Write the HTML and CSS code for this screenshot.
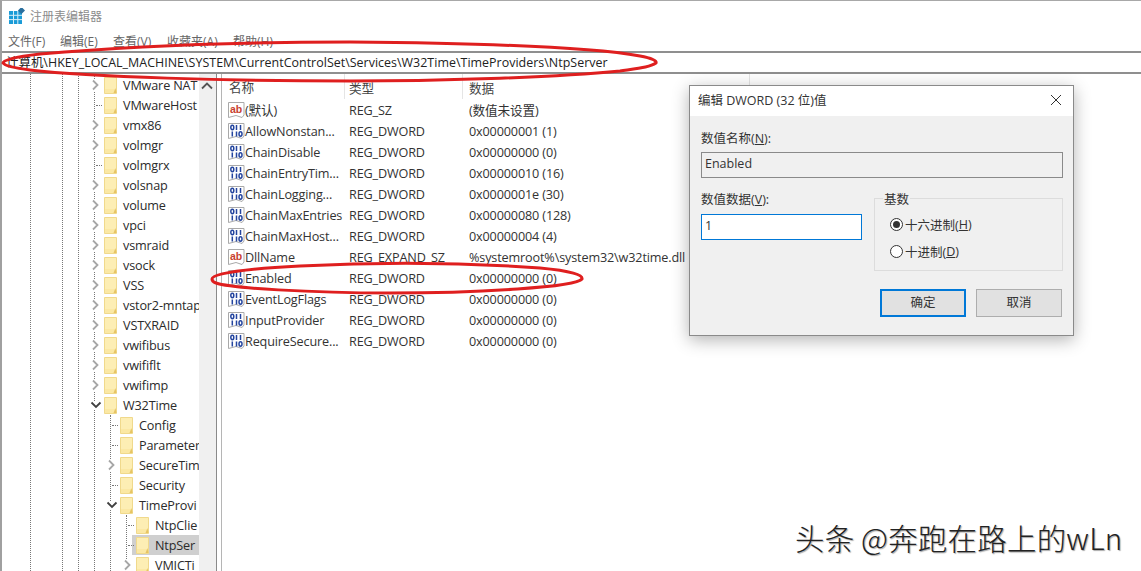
FILE: index.html
```html
<!DOCTYPE html>
<html lang="en">
<head>
    <meta charset="UTF-8">
    <title>注册表编辑器</title>
    <link rel="stylesheet" href="styles.css">
</head>
<body>
    <svg class="defs" width="0" height="0">
        <symbol id="folder" viewBox="0 0 13 20">
            <path d="M0.500 2.500h12v16h-12z" fill="#fbe8a4" stroke="#f0d98c"/>
            <path d="M1 3h11v11h-11z" fill="#fdeeb4"/>
            <path d="M9.500 18l2-5 1 5z" fill="#e6c463"/>
        </symbol>
        <symbol id="dword" viewBox="0 0 17 18">
            <path d="M0.500 1.500h15.500v12.500l-2 2.500-6-2-7.500 2z" fill="#fff" stroke="#a9a9a9"/>
            <g fill="none" stroke="#24459f" stroke-width="1.500">
                <ellipse cx="4.300" cy="5.500" rx="1.500" ry="2.200"/>
                <path d="M8.500 3v5M12.500 3v5"/>
                <path d="M4.300 9.500v5M8.500 9.500v5"/>
                <ellipse cx="12.500" cy="12" rx="1.500" ry="2.200"/>
            </g>
        </symbol>
        <symbol id="closed" viewBox="0 0 9 12">
            <path d="M2 1.500l4.500 4.500-4.500 4.500" fill="none" stroke="#a6a6a6" stroke-width="1.800"/>
        </symbol>
        <symbol id="open" viewBox="0 0 12 9">
            <path d="M1.500 1.500l4.500 4.500 4.500-4.500" fill="none" stroke="#404040" stroke-width="1.800"/>
        </symbol>
    </svg>

    <div class="window">
        <div class="titlebar">
            <svg class="app-icon" width="16" height="16" viewBox="0 0 16 16">
                <rect x="0" y="3" width="13" height="13" fill="#1a9bd7"/>
                <path d="M4.500 3v13M8.800 3v13M0 7.300h13M0 11.600h13" stroke="#d8eef8" stroke-width="1"/>
                <rect x="10" y="0" width="5" height="5" fill="#2a6f9e" transform="rotate(45 12.500 2.500)"/>
            </svg>
            <span class="app-name">注册表编辑器</span>
        </div>
        <div class="menubar">
            <span class="menu-item">文件(F)</span>
            <span class="menu-item">编辑(E)</span>
            <span class="menu-item">查看(V)</span>
            <span class="menu-item">收藏夹(A)</span>
            <span class="menu-item">帮助(H)</span>
        </div>
        <div class="address">计算机\HKEY_LOCAL_MACHINE\SYSTEM\CurrentControlSet\Services\W32Time\TimeProviders\NtpServer</div>

        <div class="main">
            <div class="tree">
                <i class="guide guide-a"></i>
                <i class="guide guide-b"></i>
                <i class="guide guide-c"></i>
                <i class="guide guide-d"></i>
                <i class="guide guide-e"></i>
                <i class="guide guide-f"></i>

                <div class="node"><svg class="arrow"><use href="#closed"/></svg><svg class="folder"><use href="#folder"/></svg><span>VMware NAT</span></div>
                <div class="node"><b class="tick"></b><svg class="folder"><use href="#folder"/></svg><span>VMwareHost</span></div>
                <div class="node"><svg class="arrow"><use href="#closed"/></svg><svg class="folder"><use href="#folder"/></svg><span>vmx86</span></div>
                <div class="node"><svg class="arrow"><use href="#closed"/></svg><svg class="folder"><use href="#folder"/></svg><span>volmgr</span></div>
                <div class="node"><b class="tick"></b><svg class="folder"><use href="#folder"/></svg><span>volmgrx</span></div>
                <div class="node"><svg class="arrow"><use href="#closed"/></svg><svg class="folder"><use href="#folder"/></svg><span>volsnap</span></div>
                <div class="node"><svg class="arrow"><use href="#closed"/></svg><svg class="folder"><use href="#folder"/></svg><span>volume</span></div>
                <div class="node"><svg class="arrow"><use href="#closed"/></svg><svg class="folder"><use href="#folder"/></svg><span>vpci</span></div>
                <div class="node"><svg class="arrow"><use href="#closed"/></svg><svg class="folder"><use href="#folder"/></svg><span>vsmraid</span></div>
                <div class="node"><svg class="arrow"><use href="#closed"/></svg><svg class="folder"><use href="#folder"/></svg><span>vsock</span></div>
                <div class="node"><svg class="arrow"><use href="#closed"/></svg><svg class="folder"><use href="#folder"/></svg><span>VSS</span></div>
                <div class="node"><svg class="arrow"><use href="#closed"/></svg><svg class="folder"><use href="#folder"/></svg><span>vstor2-mntap</span></div>
                <div class="node"><svg class="arrow"><use href="#closed"/></svg><svg class="folder"><use href="#folder"/></svg><span>VSTXRAID</span></div>
                <div class="node"><svg class="arrow"><use href="#closed"/></svg><svg class="folder"><use href="#folder"/></svg><span>vwifibus</span></div>
                <div class="node"><svg class="arrow"><use href="#closed"/></svg><svg class="folder"><use href="#folder"/></svg><span>vwififlt</span></div>
                <div class="node"><svg class="arrow"><use href="#closed"/></svg><svg class="folder"><use href="#folder"/></svg><span>vwifimp</span></div>
                <div class="node"><svg class="arrow arrow-open"><use href="#open"/></svg><svg class="folder"><use href="#folder"/></svg><span>W32Time</span></div>
                <div class="node lvl1"><b class="tick"></b><svg class="folder"><use href="#folder"/></svg><span>Config</span></div>
                <div class="node lvl1"><b class="tick"></b><svg class="folder"><use href="#folder"/></svg><span>Parameter</span></div>
                <div class="node lvl1"><svg class="arrow"><use href="#closed"/></svg><svg class="folder"><use href="#folder"/></svg><span>SecureTim</span></div>
                <div class="node lvl1"><b class="tick"></b><svg class="folder"><use href="#folder"/></svg><span>Security</span></div>
                <div class="node lvl1"><svg class="arrow arrow-open"><use href="#open"/></svg><svg class="folder"><use href="#folder"/></svg><span>TimeProvi</span></div>
                <div class="node lvl2"><b class="tick"></b><svg class="folder"><use href="#folder"/></svg><span>NtpClie</span></div>
                <div class="node lvl2 selected"><b class="tick"></b><svg class="folder"><use href="#folder"/></svg><span>NtpSer</span></div>
                <div class="node lvl2"><svg class="arrow"><use href="#closed"/></svg><svg class="folder"><use href="#folder"/></svg><span>VMICTi</span></div>
            </div>
            <div class="scrollbar">
                <svg class="scroll-up" width="12" height="8" viewBox="0 0 12 8"><path d="M1 6.500l5-5 5 5" fill="none" stroke="#555" stroke-width="1.800"/></svg>
            </div>
            <div class="splitter"></div>
            <div class="list">
                <div class="list-head">
                    <div class="col-name head-cell">名称</div>
                    <div class="col-type head-cell">类型</div>
                    <div class="col-data head-cell">数据</div>
                </div>
                <div class="row"><div class="col-name"><svg class="reg-icon" viewBox="0 0 17 18"><path d="M0.500 1.500h15.500v12.500l-2 2.500-6-2-7.500 2z" fill="#fff" stroke="#a9a9a9"/><text x="2" y="11.500" class="sz-text">ab</text></svg>(默认)</div><div class="col-type">REG_SZ</div><div class="col-data">(数值未设置)</div></div>
                <div class="row"><div class="col-name"><svg class="reg-icon"><use href="#dword"/></svg>AllowNonstan...</div><div class="col-type">REG_DWORD</div><div class="col-data">0x00000001 (1)</div></div>
                <div class="row"><div class="col-name"><svg class="reg-icon"><use href="#dword"/></svg>ChainDisable</div><div class="col-type">REG_DWORD</div><div class="col-data">0x00000000 (0)</div></div>
                <div class="row"><div class="col-name"><svg class="reg-icon"><use href="#dword"/></svg>ChainEntryTim...</div><div class="col-type">REG_DWORD</div><div class="col-data">0x00000010 (16)</div></div>
                <div class="row"><div class="col-name"><svg class="reg-icon"><use href="#dword"/></svg>ChainLogging...</div><div class="col-type">REG_DWORD</div><div class="col-data">0x0000001e (30)</div></div>
                <div class="row"><div class="col-name"><svg class="reg-icon"><use href="#dword"/></svg>ChainMaxEntries</div><div class="col-type">REG_DWORD</div><div class="col-data">0x00000080 (128)</div></div>
                <div class="row"><div class="col-name"><svg class="reg-icon"><use href="#dword"/></svg>ChainMaxHost...</div><div class="col-type">REG_DWORD</div><div class="col-data">0x00000004 (4)</div></div>
                <div class="row"><div class="col-name"><svg class="reg-icon" viewBox="0 0 17 18"><path d="M0.500 1.500h15.500v12.500l-2 2.500-6-2-7.500 2z" fill="#fff" stroke="#a9a9a9"/><text x="2" y="11.500" class="sz-text">ab</text></svg>DllName</div><div class="col-type">REG_EXPAND_SZ</div><div class="col-data">%systemroot%\system32\w32time.dll</div></div>
                <div class="row"><div class="col-name"><svg class="reg-icon"><use href="#dword"/></svg>Enabled</div><div class="col-type">REG_DWORD</div><div class="col-data">0x00000000 (0)</div></div>
                <div class="row"><div class="col-name"><svg class="reg-icon"><use href="#dword"/></svg>EventLogFlags</div><div class="col-type">REG_DWORD</div><div class="col-data">0x00000000 (0)</div></div>
                <div class="row"><div class="col-name"><svg class="reg-icon"><use href="#dword"/></svg>InputProvider</div><div class="col-type">REG_DWORD</div><div class="col-data">0x00000000 (0)</div></div>
                <div class="row"><div class="col-name"><svg class="reg-icon"><use href="#dword"/></svg>RequireSecure...</div><div class="col-type">REG_DWORD</div><div class="col-data">0x00000000 (0)</div></div>
            </div>
        </div>
    </div>

    <!-- dialog floats over the main window -->
    <div class="dialog">
        <div class="dialog-title">
            <span>编辑 DWORD (32 位)值</span>
            <svg class="dialog-close" width="12" height="12" viewBox="0 0 12 12"><path d="M1 1l10 10M11 1l-10 10" stroke="#333" stroke-width="1"/></svg>
        </div>
        <div class="dialog-body">
            <div class="field-label">数值名称(<u>N</u>):</div>
            <div class="name-box">Enabled</div>
            <div class="dialog-columns">
                <div class="value-col">
                    <div class="field-label">数值数据(<u>V</u>):</div>
                    <div class="value-box">1</div>
                </div>
                <div class="base-group">
                    <span class="base-legend">基数</span>
                    <div class="radio-line"><i class="radio radio-on"></i>十六进制(<u>H</u>)</div>
                    <div class="radio-line"><i class="radio"></i>十进制(<u>D</u>)</div>
                </div>
            </div>
            <div class="dialog-buttons">
                <div class="btn btn-default">确定</div>
                <div class="btn">取消</div>
            </div>
        </div>
    </div>

    <!-- red marker strokes drawn on top of the screenshot -->
    <svg class="marks" width="1141" height="571" viewBox="0 0 1141 571">
        <path d="M3 63C3 60 14 57 40 54C130 46 240 42 350 42C470 43 590 47 640 56C652 58 657 61 656 63C650 67 640 68 620 71C560 77 450 81 350 81C230 81 90 77 30 70C14 68 5 66 3 63Z"/>
        <path d="M212 279C212 274 240 269 300 266C380 262 470 263 540 268C572 271 583 275 582 279C576 287 480 293 390 293C310 293 230 288 216 283C213 282 212 281 212 279Z"/>
    </svg>

    <div class="watermark">头条 @奔跑在路上的wLn</div>
</body>
</html>
```

FILE: styles.css
```css
* {
    box-sizing: border-box;
}

body {
    margin: 0;
    width: 1141px;
    height: 571px;
    overflow: hidden;
    background: #fff;
    color: #2b2b2b;
    font-family: "Open Sans", "Noto Sans CJK SC", sans-serif;
    font-size: 12.650px;
}

.defs {
    display: block;
    height: 0;
}

.sz-text {
    font-family: "Liberation Sans", sans-serif;
    font-size: 10.500px;
    font-weight: 700;
    fill: #c8402f;
}

.window {
    display: flex;
    flex-direction: column;
    height: 571px;
    border-top: 1px solid #a8a8a8;
    border-left: 2px solid #a0a0a0;
}

/* Title and menu */
.titlebar {
    display: flex;
    align-items: center;
    height: 29px;
    padding-left: 7px;
    gap: 5px;
}

.app-name {
    font-size: 12px;
    color: #8c8c8c;
}

.menubar {
    display: flex;
    height: 21px;
    padding-left: 6px;
    align-items: center;
    font-size: 12px;
    color: #666;
}

.menu-item:nth-child(1) { width: 52px; }
.menu-item:nth-child(2) { width: 53px; }
.menu-item:nth-child(3) { width: 54px; }
.menu-item:nth-child(4) { width: 66px; }

.address {
    height: 23px;
    line-height: 20px;
    padding-left: 4px;
    border-top: 2px solid #8f8f8f;
    border-bottom: 2px solid #8f8f8f;
    font-size: 12.450px;
    letter-spacing: 0.020px;
    color: #222;
    white-space: nowrap;
}

.main {
    flex: 1;
    display: flex;
    min-height: 0;
}

/* Key tree */
.tree {
    position: relative;
    width: 197px;
    padding-top: 1px;
    overflow: hidden;
    letter-spacing: -0.150px;
}

.guide {
    position: absolute;
    top: 0;
    bottom: 0;
    width: 0;
    border-left: 1px dotted #777;
}

.guide-a { left: 28px; }
.guide-b { left: 60px; }
.guide-c { left: 76px; }
.guide-d { left: 92px; }
.guide-e { left: 108px; top: 341px; }
.guide-f { left: 124px; top: 441px; }

.node {
    position: relative;
    display: flex;
    align-items: center;
    height: 20px;
    padding-left: 102px;
    white-space: nowrap;
    color: #2b2b2b;
}

.node.lvl1 { padding-left: 118px; }
.node.lvl2 { padding-left: 134px; }

.folder {
    width: 13px;
    height: 20px;
    margin-right: 6px;
    flex: none;
}

.node.selected {
    background: linear-gradient(#cfcfcf, #cfcfcf) no-repeat 130px 0 / 67px 20px;
}

.arrow {
    position: absolute;
    left: 89px;
    top: 4px;
    width: 9px;
    height: 12px;
    background: #fff;
}

.arrow-open {
    left: 88px;
    top: 6px;
    width: 12px;
    height: 9px;
}

.lvl1 .arrow { left: 105px; }
.lvl1 .arrow-open { left: 104px; }
.lvl2 .arrow { left: 121px; }

.tick {
    position: absolute;
    left: 94px;
    top: 10px;
    width: 6px;
    border-top: 1px dotted #777;
}

.lvl1 .tick { left: 110px; }
.lvl2 .tick { left: 126px; }

.scrollbar {
    width: 17px;
    background: #f0f0f0;
    padding: 8px 0 0 2px;
}

.scroll-up {
    display: block;
}

.splitter {
    width: 6px;
    border-left: 1px solid #8a8a8a;
    border-right: 1px solid #b5b5b5;
}

/* Value list */
.list {
    flex: 1;
    min-width: 0;
    letter-spacing: -0.150px;
}

.list-head {
    display: flex;
    height: 25px;
}

.head-cell {
    height: 25px;
    line-height: 28px;
    border-right: 1px solid #e5e5e5;
    color: #444;
}

.col-name {
    display: flex;
    align-items: center;
    width: 127px;
    padding-left: 7px;
    flex: none;
    white-space: nowrap;
}

.col-type {
    width: 120px;
    flex: none;
}

.head-cell.col-type {
    width: 118px;
    padding-left: 4px;
}

.head-cell.col-name {
    width: 123px;
}

.col-data {
    white-space: nowrap;
}

.head-cell.col-data {
    width: 287px;
    padding-left: 6px;
}

.row {
    display: flex;
    align-items: center;
    height: 21px;
    color: #333;
}

.reg-icon {
    width: 17px;
    height: 18px;
    flex: none;
    margin-left: -1px;
}

/* Dialog */
.dialog {
    position: absolute;
    left: 689px;
    top: 85px;
    width: 385px;
    height: 251px;
    background: #f0f0f0;
    border: 1px solid #8a8a8a;
    box-shadow: 0 4px 16px rgba(0, 0, 0, 0.3);
    font-size: 12.500px;
    color: #333;
}

.dialog-title {
    display: flex;
    align-items: center;
    justify-content: space-between;
    height: 30px;
    padding: 0 10px 3px 8px;
    background: #fff;
}

.dialog-body {
    padding: 14px 10px 0 11px;
}

.field-label {
    height: 17px;
    line-height: 17px;
}

.name-box {
    height: 26px;
    line-height: 22px;
    margin-top: 5px;
    padding-left: 3px;
    border: 1px solid #8a8a8a;
    background: #f0f0f0;
}

.dialog-columns {
    display: flex;
    justify-content: space-between;
    margin-top: 13px;
}

.value-col {
    width: 161px;
}

.value-box {
    height: 26px;
    line-height: 22px;
    margin-top: 6px;
    padding-left: 3px;
    background: #fff;
    border: 1px solid #0078d7;
}

.base-group {
    position: relative;
    width: 189px;
    height: 73px;
    margin-top: 7px;
    padding: 12px 0 0 15px;
    border: 1px solid #dcdcdc;
}

.base-legend {
    position: absolute;
    left: 8px;
    top: -8px;
    padding: 0 1px;
    line-height: 17px;
    background: #f0f0f0;
}

.radio-line {
    display: flex;
    align-items: center;
    height: 27px;
}

.radio {
    position: relative;
    width: 13px;
    height: 13px;
    margin-right: 2px;
    background: #fff;
    border: 1px solid #333;
    border-radius: 50%;
}

.radio-on::after {
    content: "";
    position: absolute;
    left: 2px;
    top: 2px;
    width: 7px;
    height: 7px;
    background: #333;
    border-radius: 50%;
}

.dialog-buttons {
    display: flex;
    justify-content: flex-end;
    gap: 10px;
    margin: 18px 1px 0 0;
}

.btn {
    width: 86px;
    height: 28px;
    line-height: 26px;
    text-align: center;
    background: #e1e1e1;
    border: 1px solid #adadad;
}

.btn-default {
    border: 2px solid #0078d7;
    line-height: 24px;
}

.dialog-close {
    margin-right: 1px;
}

/* Overlays */
.marks {
    position: absolute;
    left: 0;
    top: 0;
    pointer-events: none;
}

.marks path {
    fill: none;
    stroke: #df1f1f;
    stroke-width: 3;
}

.watermark {
    position: absolute;
    left: 795px;
    top: 518px;
    font-family: "Noto Sans CJK SC", sans-serif;
    font-size: 29.500px;
    font-weight: 300;
    letter-spacing: 0.200px;
    line-height: 38px;
    color: #222;
    white-space: nowrap;
    text-shadow: 1px 1px 1px rgba(0, 0, 0, 0.35);
}
```
